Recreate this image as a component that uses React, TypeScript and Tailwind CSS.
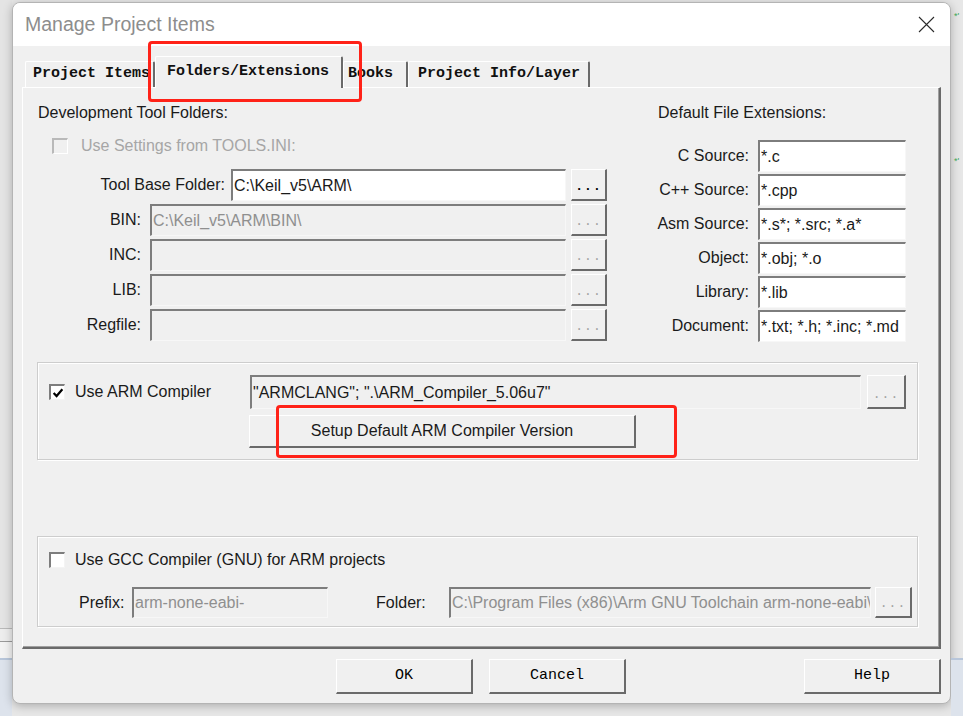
import React from "react";

const ui = "font-['Liberation_Sans',Arial,sans-serif]";
const mono = "font-['Liberation_Mono','Courier_New',monospace]";

const sunken =
  "border-t-2 border-l-2 border-r border-b border-t-[#7d7d7d] border-l-[#7d7d7d] border-r-[#f7f7f7] border-b-[#f7f7f7]";
const raised =
  "border-t border-l border-r-2 border-b-2 border-t-white border-l-white border-r-[#6a6a6a] border-b-[#6a6a6a] bg-[#f0f0f0]";

function Field({
  value = "",
  w,
  h = 32,
  white,
  dim,
}: {
  value?: string;
  w: number;
  h?: number;
  white?: boolean;
  dim?: boolean;
}) {
  return (
    <div
      className={`flex shrink-0 items-center overflow-hidden whitespace-nowrap pl-[1px] text-[16px] ${sunken} ${
        white ? "bg-white" : "bg-[#f0f0f0]"
      } ${dim ? "text-[#8f8f8f]" : "text-[#1a1a1a]"}`}
      style={{ width: w, height: h }}
    >
      {value}
    </div>
  );
}

function Dots({ w = 36, h = 32, on }: { w?: number; h?: number; on?: boolean }) {
  return (
    <div
      className={`flex shrink-0 items-end justify-center pb-[6px] ${raised}`}
      style={{ width: w, height: h }}
    >
      <span
        className={`${mono} text-[13px] leading-none tracking-[1px] ${
          on ? "font-bold text-black" : "text-[#a3a3a3]"
        }`}
      >
        ...
      </span>
    </div>
  );
}

function CheckBox({ checked, disabled }: { checked?: boolean; disabled?: boolean }) {
  return (
    <span
      className={`flex h-[16px] w-[16px] shrink-0 items-center justify-center border-t-2 border-l-2 border-r border-b ${
        disabled
          ? "border-t-[#b9b9b9] border-l-[#b9b9b9] border-r-white border-b-white bg-[#f0f0f0]"
          : "border-t-[#7d7d7d] border-l-[#7d7d7d] border-r-[#f4f4f4] border-b-[#f4f4f4] bg-white"
      }`}
    >
      {checked && (
        <svg width="12" height="12" viewBox="0 0 11 11">
          <path d="M1.5 5.5 L4.2 8.3 L9.5 2" fill="none" stroke="#000" strokeWidth="2" />
        </svg>
      )}
    </span>
  );
}

function Tab({
  label,
  w,
  pl,
  active,
}: {
  label: string;
  w: number;
  pl: number;
  active?: boolean;
}) {
  return (
    <div
      className={`flex shrink-0 items-center rounded-t-[2px] border-t border-l border-r-2 border-t-white border-l-white border-r-[#6a6a6a] bg-[#f0f0f0] ${mono} text-[15px] font-bold text-[#111] ${
        active ? "relative z-10 h-[32px] -mb-[1px]" : "h-[26px]"
      }`}
      style={{ width: w, paddingLeft: pl }}
    >
      {label}
    </div>
  );
}

function PathRow({
  label,
  labelGap,
  w,
  value,
  white,
  dim,
  on,
}: {
  label: string;
  labelGap: number;
  w: number;
  value?: string;
  white?: boolean;
  dim?: boolean;
  on?: boolean;
}) {
  return (
    <div className="flex h-[32px] items-center justify-end">
      <span className="text-[16px] text-[#1a1a1a]" style={{ marginRight: labelGap }}>
        {label}
      </span>
      <Field value={value} w={w} white={white} dim={dim} />
      <div className="ml-[5px]">
        <Dots on={on} />
      </div>
    </div>
  );
}

function ExtRow({ label, value }: { label: string; value: string }) {
  return (
    <div className="flex h-[32px] items-center justify-end">
      <span className="mr-[9px] text-[16px] text-[#1a1a1a]">{label}</span>
      <Field value={value} w={148} white />
    </div>
  );
}

function PushButton({ label, w }: { label: string; w: number }) {
  return (
    <div
      className={`flex h-[35px] shrink-0 items-center justify-center ${raised} ${mono} text-[15px] text-[#000]`}
      style={{ width: w }}
    >
      {label}
    </div>
  );
}

function CloseIcon() {
  return (
    <svg width="17" height="17" viewBox="0 0 17 17">
      <path d="M1 1 L16 16 M16 1 L1 16" stroke="#2b2b2b" strokeWidth="1.1" />
    </svg>
  );
}

function Dialog() {
  return (
    <div className="mt-[2px] flex h-[702px] w-[939px] shrink-0 flex-col overflow-hidden rounded-[8px] border border-[#b4b4b4] bg-[#f0f0f0] shadow-[0_2px_10px_rgba(0,0,0,0.25)]">
      {/* title bar */}
      <div className="flex h-[43px] shrink-0 items-center justify-between bg-white pl-[12px] pr-[15px]">
        <span className="text-[19.5px] text-[#8d8d8d]">Manage Project Items</span>
        <CloseIcon />
      </div>

      <div className="flex flex-1 flex-col px-[9px] pt-[10px]">
        {/* tabs */}
        <div className="ml-[3px] flex items-end">
          <Tab label="Project Items" w={130} pl={7} />
          <Tab label="Folders/Extensions" w={188} pl={11} active />
          <Tab label="Books" w={65} pl={4} />
          <Tab label="Project Info/Layer" w={182} pl={9} />
        </div>

        {/* tab page */}
        <div className="flex h-[562px] flex-col border-t border-l border-r-2 border-b-2 border-t-white border-l-white border-r-[#6a6a6a] border-b-[#6a6a6a] pl-[14px] pt-[15px] shadow-[inset_-1px_-1px_0_#a0a0a0]">
          <div className="flex">
            {/* tool folders */}
            <div className="flex w-[570px] flex-col">
              <div className="ml-[1px] h-[20px] text-[16px] leading-[20px] text-[#1a1a1a]">
                Development Tool Folders:
              </div>
              <div className="mt-[13px] flex h-[20px] items-center pl-[15px]">
                <CheckBox disabled />
                <span className="ml-[13px] text-[16px] text-[#a6a6a6]">Use Settings from TOOLS.INI:</span>
              </div>
              <div className="mt-[13px] flex flex-col gap-[3px]">
                <PathRow label="Tool Base Folder:" labelGap={6} w={335} value="C:\Keil_v5\ARM\" white on />
                <PathRow label="BIN:" labelGap={9} w={416} value="C:\Keil_v5\ARM\BIN\" dim />
                <PathRow label="INC:" labelGap={9} w={416} />
                <PathRow label="LIB:" labelGap={9} w={416} />
                <PathRow label="Regfile:" labelGap={9} w={416} />
              </div>
            </div>

            {/* file extensions */}
            <div className="ml-[33px] flex w-[266px] flex-col">
              <div className="ml-[18px] h-[20px] text-[16px] leading-[20px] text-[#1a1a1a]">
                Default File Extensions:
              </div>
              <div className="mt-[17px] flex flex-col gap-[2px]">
                <ExtRow label="C Source:" value="*.c" />
                <ExtRow label="C++ Source:" value="*.cpp" />
                <ExtRow label="Asm Source:" value="*.s*; *.src; *.a*" />
                <ExtRow label="Object:" value="*.obj; *.o" />
                <ExtRow label="Library:" value="*.lib" />
                <ExtRow label="Document:" value="*.txt; *.h; *.inc; *.md" />
              </div>
            </div>
          </div>

          {/* ARM compiler group */}
          <div className="mt-[20px] flex w-[881px] border border-[#cdcdcd] pb-[11px] pt-[12px] shadow-[inset_1px_1px_0_#fff,1px_1px_0_#fff]">
            <div className="flex h-[34px] w-[212px] items-center pl-[11px]">
              <CheckBox checked />
              <span className="ml-[10px] text-[16px] text-[#1a1a1a]">Use ARM Compiler</span>
            </div>
            <div className="flex flex-col">
              <div className="flex items-center">
                <Field value={'"ARMCLANG"; ".\\ARM_Compiler_5.06u7"'} w={611} h={34} />
                <div className="ml-[6px]">
                  <Dots w={39} h={34} />
                </div>
              </div>
              <div
                className={`-ml-[1px] mt-[6px] flex h-[33px] w-[387px] items-center justify-center text-[16px] text-[#1a1a1a] ${raised}`}
              >
                Setup Default ARM Compiler Version
              </div>
            </div>
          </div>

          {/* GCC group */}
          <div className="mt-[76px] flex w-[881px] flex-col border border-[#cdcdcd] pb-[8px] pt-[13px] shadow-[inset_1px_1px_0_#fff,1px_1px_0_#fff]">
            <div className="flex h-[20px] items-center pl-[11px]">
              <CheckBox />
              <span className="ml-[10px] text-[16px] text-[#1a1a1a]">Use GCC Compiler (GNU) for ARM projects</span>
            </div>
            <div className="mt-[17px] flex h-[31px] items-center pl-[41px]">
              <span className="w-[53px] shrink-0 text-[16px] text-[#1a1a1a]">Prefix:</span>
              <Field value="arm-none-eabi-" w={196} h={31} dim />
              <span className="ml-[48px] w-[73px] shrink-0 text-[16px] text-[#1a1a1a]">Folder:</span>
              <Field value="C:\Program Files (x86)\Arm GNU Toolchain arm-none-eabi\" w={422} h={31} dim />
              <div className="ml-[4px]">
                <Dots w={37} h={31} />
              </div>
            </div>
          </div>
        </div>

        {/* dialog buttons */}
        <div className="mt-[10px] flex">
          <div className="ml-[314px]">
            <PushButton label="OK" w={137} />
          </div>
          <div className="ml-[16px]">
            <PushButton label="Cancel" w={137} />
          </div>
          <div className="ml-[178px]">
            <PushButton label="Help" w={137} />
          </div>
        </div>
      </div>
    </div>
  );
}

export default function App() {
  return (
    <div className={`relative flex h-[716px] w-[963px] overflow-hidden bg-[#e7e7e7] ${ui}`}>
      {/* window behind, left edge */}
      <div className="flex w-[12px] shrink-0 flex-col">
        <div className="h-[628px] bg-[#e4e4e4]" />
        <div className="h-[1px] bg-[#b9b9b9]" />
        <div className="h-[12px] bg-[#ededed]" />
        <div className="h-[1px] bg-[#9a9a9a]" />
        <div className="h-[16px] bg-[#f3f3f3]" />
        <div className="h-[2px] bg-[#b8c6da]" />
        <div className="flex-1 bg-[#dde3ec]" />
      </div>

      <Dialog />

      {/* window behind, right edge */}
      <div className="flex w-[12px] shrink-0 flex-col">
        <div className="mt-[12px] pl-[3px] text-[9px] leading-none text-[#3aa655]">*'</div>
        <div className="mt-[136px] pl-[3px] text-[9px] leading-none text-[#3aa655]">*'</div>
        <div className="mt-[492px] h-[2px] bg-[#b8c6da]" />
        <div className="flex-1 bg-[#dde3ec]" />
      </div>

      {/* red annotation frames */}
      <div className="pointer-events-none absolute left-[148px] top-[41px] h-[61px] w-[214px] rounded-[4px] border-[3px] border-[#ff2218]" />
      <div className="pointer-events-none absolute left-[276px] top-[405px] h-[53px] w-[401px] rounded-[4px] border-[3px] border-[#ff2218]" />
    </div>
  );
}
